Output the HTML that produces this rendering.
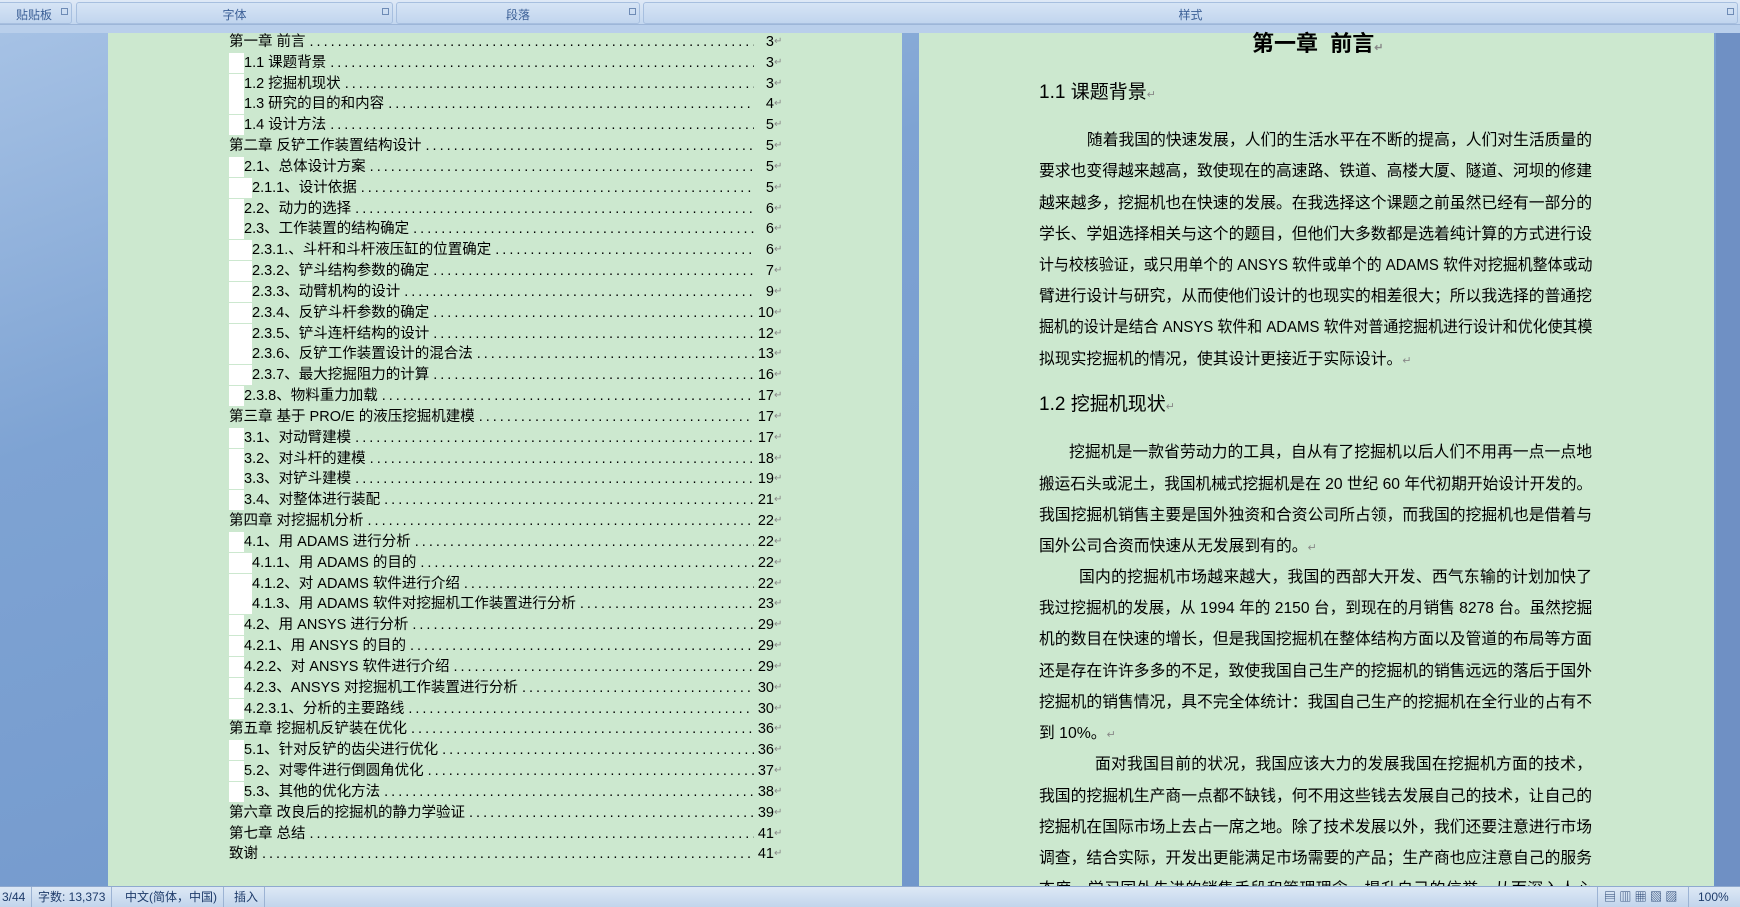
<!DOCTYPE html>
<html><head><meta charset="utf-8"><style>
*{margin:0;padding:0;box-sizing:border-box}
body{width:1740px;height:907px;overflow:hidden;position:relative;background:linear-gradient(160deg,#a9c4e6 0%,#7ea3d3 30%,#6c92c8 100%);font-family:"Liberation Sans","Noto Sans CJK SC",sans-serif;color:#000}
.rib{position:absolute;top:0;left:0;width:1740px;height:25px;background:linear-gradient(#dfe9f6,#c3d7ef);border-bottom:1px solid #9db6d8}
.grp{position:absolute;top:2px;height:22px;border:1px solid #a7bfdf;border-radius:3px;background:linear-gradient(#d6e4f5,#c1d5ee);color:#3b5f96;font-size:12px;text-align:center;line-height:24px}
.grp i{position:absolute;right:3px;top:5px;width:7px;height:7px;border:1px solid #6e8bb5;font-size:0}
.strip{position:absolute;top:25px;left:0;width:1740px;height:8px;background:#b9cfeb}
.page{position:absolute;top:33px;height:853px;background:#cce8cf}
.sb{position:absolute;left:0;top:886px;width:1740px;height:21px;background:linear-gradient(#dde8f5,#c2d5ec);border-top:1px solid #8fa9cf;font-size:12px;color:#1e3b6a;line-height:20px}
.sb span{position:absolute;top:0;padding:0 6px;border-right:1px solid #9cb3d3}
.t{position:absolute;height:20px;font-size:14.5px;line-height:20px;display:flex;white-space:nowrap;right:956px}
.t .d{flex:1;overflow:hidden;letter-spacing:3px;padding-left:4px}
.t .n{width:20px;text-align:right}
.t .r{width:10px;color:#888;font-size:10px}
.w{position:absolute;background:#fff;width:15px;height:20px}
.p{position:absolute;left:1039px;width:553px;font-size:15.8px;line-height:20px;height:20px;white-space:nowrap;text-align:justify;text-align-last:justify;transform-origin:0 0}
.p.e{text-align-last:left}
.rt{color:#888;font-size:11px}
</style></head><body>
<div class="rib">
<div class="grp" style="left:-4px;width:76px">贴贴板<i></i></div>
<div class="grp" style="left:76px;width:317px">字体<i></i></div>
<div class="grp" style="left:396px;width:244px">段落<i></i></div>
<div class="grp" style="left:643px;width:1095px">样式<i></i></div>
</div>
<div class="strip"></div>
<div class="page" style="left:108px;width:794px"></div>
<div class="page" style="left:919px;width:795px"></div>
<div style="position:absolute;left:1716px;top:33px;width:24px;height:853px;background:#6f90c4"></div>
<div id="toc"></div>
<div style="position:absolute;left:1252px;top:30px;font-size:22px;font-weight:bold;line-height:28px">第一章&nbsp;&nbsp;前言<span class="rt">↵</span></div>
<div style="position:absolute;left:1039px;top:81px;font-size:19px;line-height:24px">1.1 课题背景<span class="rt">↵</span></div>
<div style="position:absolute;left:1039px;top:393px;font-size:19px;line-height:24px">1.2 挖掘机现状<span class="rt">↵</span></div>
<div class="p" style="top:131px;padding-left:48px">随着我国的快速发展，人们的生活水平在不断的提高，人们对生活质量的</div>
<div class="p" style="top:162px">要求也变得越来越高，致使现在的高速路、铁道、高楼大厦、隧道、河坝的修建</div>
<div class="p" style="top:194px">越来越多，挖掘机也在快速的发展。在我选择这个课题之前虽然已经有一部分的</div>
<div class="p" style="top:225px">学长、学姐选择相关与这个的题目，但他们大多数都是选着纯计算的方式进行设</div>
<div class="p" style="top:256px">计与校核验证，或只用单个的 ANSYS 软件或单个的 ADAMS 软件对挖掘机整体或动</div>
<div class="p" style="top:287px">臂进行设计与研究，从而使他们设计的也现实的相差很大；所以我选择的普通挖</div>
<div class="p" style="top:318px">掘机的设计是结合 ANSYS 软件和 ADAMS 软件对普通挖掘机进行设计和优化使其模</div>
<div class="p e" style="top:350px">拟现实挖掘机的情况，使其设计更接近于实际设计。<span class="rt">↵</span></div>
<div class="p" style="top:443px;padding-left:30px">挖掘机是一款省劳动力的工具，自从有了挖掘机以后人们不用再一点一点地</div>
<div class="p" style="top:475px">搬运石头或泥土，我国机械式挖掘机是在 20 世纪 60 年代初期开始设计开发的。</div>
<div class="p" style="top:506px">我国挖掘机销售主要是国外独资和合资公司所占领，而我国的挖掘机也是借着与</div>
<div class="p e" style="top:537px">国外公司合资而快速从无发展到有的。<span class="rt">↵</span></div>
<div class="p" style="top:568px;padding-left:40px">国内的挖掘机市场越来越大，我国的西部大开发、西气东输的计划加快了</div>
<div class="p" style="top:599px">我过挖掘机的发展，从 1994 年的 2150 台，到现在的月销售 8278 台。虽然挖掘</div>
<div class="p" style="top:630px">机的数目在快速的增长，但是我国挖掘机在整体结构方面以及管道的布局等方面</div>
<div class="p" style="top:662px">还是存在许许多多的不足，致使我国自己生产的挖掘机的销售远远的落后于国外</div>
<div class="p" style="top:693px">挖掘机的销售情况，具不完全体统计：我国自己生产的挖掘机在全行业的占有不</div>
<div class="p e" style="top:724px">到 10%。<span class="rt">↵</span></div>
<div class="p" style="top:755px;padding-left:56px">面对我国目前的状况，我国应该大力的发展我国在挖掘机方面的技术，</div>
<div class="p" style="top:787px">我国的挖掘机生产商一点都不缺钱，何不用这些钱去发展自己的技术，让自己的</div>
<div class="p" style="top:818px">挖掘机在国际市场上去占一席之地。除了技术发展以外，我们还要注意进行市场</div>
<div class="p" style="top:849px">调查，结合实际，开发出更能满足市场需要的产品；生产商也应注意自己的服务</div>
<div class="p" style="top:880px;height:6px;overflow:hidden">态度，学习国外先进的销售手段和管理理念，提升自己的信誉，从而深入人心</div>
<div class="sb">
<span style="left:-4px">3/44</span><span style="left:32px">字数: 13,373</span><span style="left:119px">中文(简体，中国)</span><span style="left:228px">插入</span>
<span style="left:1597px;border-left:1px solid #9cb3d3;width:92px">▤ ▥ ▦ ▧ ▨</span><span style="left:1692px;border:none">100%</span>
</div>
<script>
var L=[[0,"第一章 前言","3"],[1,"1.1 课题背景","3"],[1,"1.2 挖掘机现状","3"],[1,"1.3 研究的目的和内容","4"],[1,"1.4 设计方法","5"],[0,"第二章 反铲工作装置结构设计","5"],[1,"2.1、总体设计方案","5"],[2,"2.1.1、设计依据","5"],[1,"2.2、动力的选择","6"],[1,"2.3、工作装置的结构确定","6"],[2,"2.3.1.、斗杆和斗杆液压缸的位置确定","6"],[2,"2.3.2、铲斗结构参数的确定","7"],[2,"2.3.3、动臂机构的设计","9"],[2,"2.3.4、反铲斗杆参数的确定","10"],[2,"2.3.5、铲斗连杆结构的设计","12"],[2,"2.3.6、反铲工作装置设计的混合法","13"],[2,"2.3.7、最大挖掘阻力的计算","16"],[1,"2.3.8、物料重力加载","17"],[0,"第三章 基于 PRO/E 的液压挖掘机建模","17"],[1,"3.1、对动臂建模","17"],[1,"3.2、对斗杆的建模","18"],[1,"3.3、对铲斗建模","19"],[1,"3.4、对整体进行装配","21"],[0,"第四章 对挖掘机分析","22"],[1,"4.1、用 ADAMS 进行分析","22"],[2,"4.1.1、用 ADAMS 的目的","22"],[2,"4.1.2、对 ADAMS 软件进行介绍","22"],[2,"4.1.3、用 ADAMS 软件对挖掘机工作装置进行分析","23"],[1,"4.2、用 ANSYS 进行分析","29"],[1,"4.2.1、用 ANSYS 的目的","29"],[1,"4.2.2、对 ANSYS 软件进行介绍","29"],[1,"4.2.3、ANSYS 对挖掘机工作装置进行分析","30"],[1,"4.2.3.1、分析的主要路线","30"],[0,"第五章  挖掘机反铲装在优化","36"],[1,"5.1、针对反铲的齿尖进行优化","36"],[1,"5.2、对零件进行倒圆角优化","37"],[1,"5.3、其他的优化方法","38"],[0,"第六章  改良后的挖掘机的静力学验证","39"],[0,"第七章 总结","41"],[0,"致谢","41"]];
var xs=[229,244,252],h="",dots=new Array(120).join(".");
L.forEach(function(e,i){var y=32+i*20.83;if(e[0])h+='<div class="w" style="left:229px;top:'+y+'px;width:'+(xs[e[0]]-229)+'px"></div>';h+='<div class="t" style="left:'+xs[e[0]]+'px;top:'+y+'px"><span>'+e[1]+'</span><span class="d">'+dots+'</span><span class="n">'+e[2]+'</span><span class="r">↵</span></div>';});
document.getElementById("toc").innerHTML=h;
document.querySelectorAll('.p').forEach(function(p){p.style.width='auto';var w=p.scrollWidth;if(w>553){p.style.width=w+'px';p.style.transform='scaleX('+(553/w)+')';}else{p.style.width='553px';}});
</script>
</body></html>
